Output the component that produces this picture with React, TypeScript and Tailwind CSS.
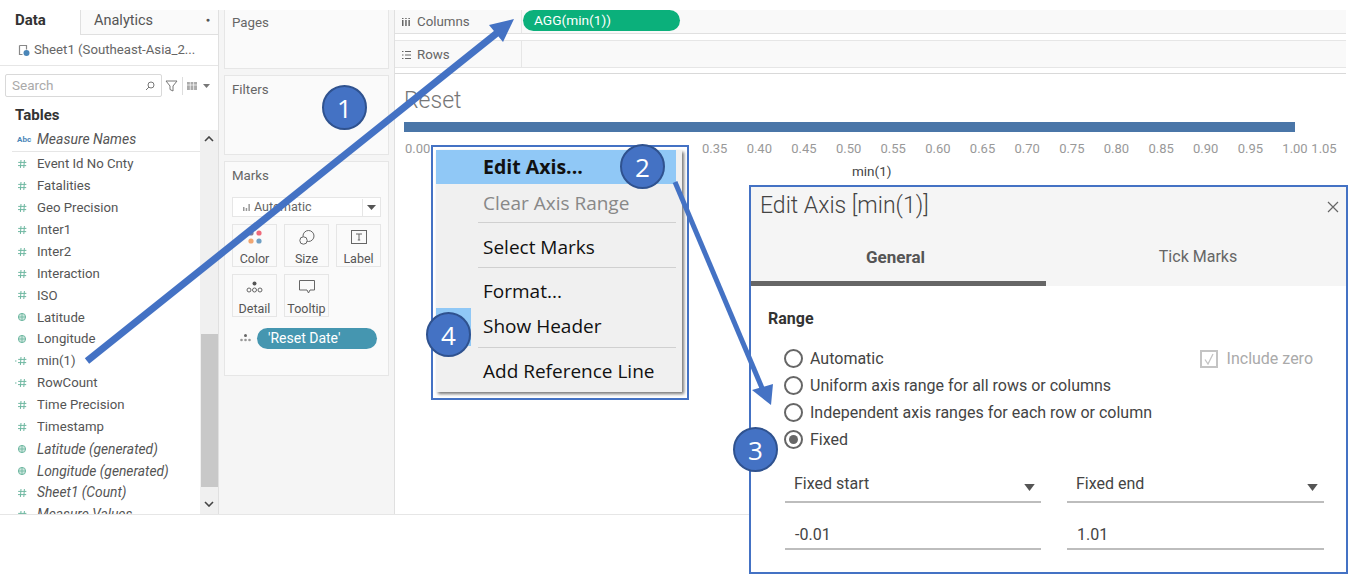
import React from "react";

const teal = "#6fb8a2";
const Hash = ({ calc }: { calc?: boolean }) => (
  <svg width="14" height="10" viewBox="0 0 14 10" className="shrink-0">
    {calc && <path d="M0 5h1.5" stroke={teal} strokeWidth="1.2" />}
    <path d="M6 1 5.400 9M9.400 1 8.800 9M3.200 3.400h8.200M3 6.600h8.200" stroke={teal} strokeWidth="1" fill="none" />
  </svg>
);
const Globe = () => (
  <svg width="14" height="10" viewBox="0 0 14 10" className="shrink-0">
    <circle cx="7" cy="5" r="3.600" stroke={teal} strokeWidth="1" fill="#cfe8df" />
    <path d="M3.400 5h7.200M7 1.400v7.200" stroke={teal} strokeWidth="0.9" />
  </svg>
);

type F = { n: string; k: "h" | "g" | "c"; i?: boolean };
const fields: F[] = [
  { n: "Event Id No Cnty", k: "h" },
  { n: "Fatalities", k: "h" },
  { n: "Geo Precision", k: "h" },
  { n: "Inter1", k: "h" },
  { n: "Inter2", k: "h" },
  { n: "Interaction", k: "h" },
  { n: "ISO", k: "h" },
  { n: "Latitude", k: "g" },
  { n: "Longitude", k: "g" },
  { n: "min(1)", k: "c" },
  { n: "RowCount", k: "c" },
  { n: "Time Precision", k: "h" },
  { n: "Timestamp", k: "h" },
  { n: "Latitude (generated)", k: "g", i: true },
  { n: "Longitude (generated)", k: "g", i: true },
  { n: "Sheet1 (Count)", k: "h", i: true },
  { n: "Measure Values", k: "h", i: true },
];

const ticks = ["0.35", "0.40", "0.45", "0.50", "0.55", "0.60", "0.65", "0.70", "0.75", "0.80", "0.85", "0.90", "0.95"];

const MarkBtn = ({ label, children }: { label: string; children: React.ReactNode }) => (
  <div className="w-[45px] h-[43px] border border-[#e6e6e6] bg-[#fafafa] flex flex-col items-center pt-[3px]">
    <div className="h-[21px] flex items-center justify-center">{children}</div>
    <div className="text-[12.500px] leading-[15px] text-[#555] mt-[4px]">{label}</div>
  </div>
);

const Circle = ({ n, cls }: { n: string; cls: string }) => (
  <div
    className={
      "absolute w-[45px] h-[45px] rounded-full bg-[#4472c4] border-2 border-[#2f528f] flex items-center justify-center text-white text-[26px] leading-none font-['Open_Sans',sans-serif] " +
      cls
    }
  >
    {n}
  </div>
);

const Radio = ({ label, on }: { label: string; on?: boolean }) => (
  <div className="h-[27px] flex items-center">
    <div className="w-[19px] h-[19px] rounded-full border-2 border-[#666] bg-white flex items-center justify-center">
      {on && <div className="w-[9px] h-[9px] rounded-full bg-[#666]" />}
    </div>
    <span className="ml-[7px] text-[16px] text-[#444]">{label}</span>
  </div>
);

const Menu = ({ t, cls = "text-[#111]", h }: { t: string; cls?: string; h: string }) => (
  <div className={"pl-[47px] flex items-center text-[19px] whitespace-nowrap " + cls + " " + h}>{t}</div>
);
const Sep = () => <div className="ml-[42px] mr-[6px] h-px bg-[#d0d0d0]" />;

const Select = ({ t }: { t: string }) => (
  <div className="h-[35px] border-b-2 border-[#bdbdbd] flex items-start justify-between pt-[4px] pl-[9px] pr-[6px] text-[16px] text-[#444]">
    <span>{t}</span>
    <svg width="11" height="7" viewBox="0 0 12 8" className="mt-[12px]"><path d="M0 0h12L6 8z" fill="#555" /></svg>
  </div>
);
const Input = ({ t }: { t: string }) => (
  <div className="h-[38px] mt-[9px] border-b-2 border-[#bdbdbd] pt-[11px] pl-[10px] text-[16px] leading-[24px] text-[#444]">{t}</div>
);

export default function App() {
  return (
    <div className="relative w-[1357px] h-[585px] overflow-hidden bg-white font-['Roboto',sans-serif] text-[#555]">
      <div className="h-[10px]" />
      <div className="flex h-[505px] w-[1346px] border-b border-[#e6e6e6]">
        {/* Data pane */}
        <div className="w-[219px] shrink-0 flex flex-col border-r border-[#e0e0e0] overflow-hidden">
          <div className="flex h-[25px] shrink-0">
            <div className="w-[80px] pl-[15px] text-[15px] font-bold text-[#333] leading-[20px]">Data</div>
            <div className="flex-1 border-l border-b border-[#e0e0e0] bg-[#fafafa] pl-[13px] pr-[8px] flex justify-between text-[14.500px] leading-[22px] text-[#555]">
              Analytics
              <span className="text-[7px] leading-[20px]">●</span>
            </div>
          </div>
          <div className="h-[31px] shrink-0 border-b border-[#e6e6e6] flex items-center pl-[17px] text-[13.200px] text-[#666] whitespace-nowrap">
            <svg width="14" height="14" viewBox="0 0 14 14" className="mr-[3px]">
              <path d="M2.500 2.500h7v4M2.500 2.500v9h3" fill="none" stroke="#888" strokeWidth="1.2" />
              <circle cx="9.500" cy="10" r="3" fill="#4a86b8" />
            </svg>
            Sheet1 (Southeast-Asia_2...
          </div>
          <div className="h-[40px] shrink-0 flex items-center pl-[5px] pb-[1px]">
            <div className="w-[157px] h-[23px] border border-[#d9d9d9] rounded-[2px] flex items-center justify-between px-[6px] text-[13.500px] text-[#aaa]">
              Search
              <svg width="10" height="10" viewBox="0 0 10 10"><circle cx="6" cy="4" r="3" fill="none" stroke="#777" /><path d="M4 6 1 9" stroke="#777" /></svg>
            </div>
            <svg width="13" height="12" viewBox="0 0 13 12" className="ml-[3px]"><path d="M1 1h11L8 6v5L5 9.500V6z" fill="none" stroke="#777" /></svg>
            <div className="w-px h-[18px] bg-[#ddd] ml-[4px]" />
            <svg width="10" height="8" viewBox="0 0 10 8" className="ml-[4px]"><path d="M0 0h10v8H0z" fill="#aaa" /><path d="M3.300 0v8M6.600 0v8M0 3h10" stroke="#fff" strokeWidth="0.7" /></svg>
            <svg width="7" height="4" viewBox="0 0 7 4" className="ml-[6px]"><path d="M0 0h7L3.500 4z" fill="#777" /></svg>
          </div>
          <div className="h-[24px] shrink-0 pl-[15px] text-[15px] font-bold text-[#333] leading-[18px]">Tables</div>
          <div className="flex flex-1 min-h-0">
            <div className="flex-1 min-w-0 overflow-hidden">
              <div className="h-[22px] ml-[12px] border-b border-[#e6e6e6] flex items-center pb-[2px] text-[14px]">
                <span className="w-[25px] text-[8px] font-bold text-[#4a86b8] pl-[5px]">Abc</span>
                <span className="italic text-[#555] whitespace-nowrap">Measure Names</span>
              </div>
              <div className="pt-[1px]">
                {fields.map((f) => (
                  <div key={f.n} className="h-[21.930px] flex items-center pl-[15px] whitespace-nowrap">
                    <span className="w-[22px]">{f.k === "g" ? <Globe /> : <Hash calc={f.k === "c"} />}</span>
                    <span className={f.i ? "italic text-[13.800px] text-[#555]" : "text-[13.200px] text-[#555]"}>{f.n}</span>
                  </div>
                ))}
              </div>
            </div>
            <div className="w-[18px] shrink-0 bg-[#f0f0f0] flex flex-col items-center">
              <svg width="10" height="6" viewBox="0 0 10 6" className="mt-[6px]"><path d="M1 5l4-4 4 4" fill="none" stroke="#444" strokeWidth="1.6" /></svg>
              <div className="w-[17px] h-[153px] bg-[#c8c8c8] mt-[192px]" />
              <svg width="10" height="6" viewBox="0 0 10 6" className="mt-[14px]"><path d="M1 1l4 4 4-4" fill="none" stroke="#444" strokeWidth="1.6" /></svg>
            </div>
          </div>
        </div>

        {/* Shelves column */}
        <div className="w-[176px] shrink-0 bg-[#f5f5f5] border-r border-[#e0e0e0] px-[5px] flex flex-col gap-[6px]">
          <div className="h-[59px] bg-[#fafafa] border border-[#e6e6e6] border-t-0 pl-[7px] pt-[3px] text-[13.300px] text-[#666]">Pages</div>
          <div className="h-[80px] bg-[#fafafa] border border-[#e6e6e6] pl-[7px] pt-[4px] text-[13.300px] text-[#666]">Filters</div>
          <div className="h-[215px] bg-[#fafafa] border border-[#e6e6e6] px-[7px] pt-[4px] text-[13.300px] text-[#666]">
            Marks
            <div className="mt-[11px] h-[20px] border border-[#e6e6e6] bg-white flex items-center text-[12.500px] pl-[10px] pt-[1px]">
              <svg width="7" height="7" viewBox="0 0 7 7" className="mr-[4px]"><path d="M0 3h1.500v4H0zM2.700 4h1.500v3H2.700zM5.400 0h1.500v7H5.400z" fill="#999" /></svg>
              Automatic
              <div className="ml-auto w-[18px] h-full border-l border-[#e6e6e6] flex items-center justify-center">
                <svg width="9" height="5" viewBox="0 0 9 5"><path d="M0 0h9L4.500 5z" fill="#555" /></svg>
              </div>
            </div>
            <div className="flex gap-[7px] mt-[7px]">
              <MarkBtn label="Color">
                <svg width="14" height="14" viewBox="0 0 14 14">
                  <circle cx="3" cy="3" r="2.600" fill="#7d7d9b" /><circle cx="11" cy="3" r="2.600" fill="#ef6a7b" />
                  <circle cx="3" cy="11" r="2.600" fill="#f0a672" /><circle cx="11" cy="11" r="2.600" fill="#6f9fc4" />
                </svg>
              </MarkBtn>
              <MarkBtn label="Size">
                <svg width="16" height="15" viewBox="0 0 16 15" fill="none" stroke="#666">
                  <circle cx="9.500" cy="6" r="5.500" fill="#fafafa" /><circle cx="4.500" cy="10.500" r="3.700" fill="#fafafa" />
                </svg>
              </MarkBtn>
              <MarkBtn label="Label">
                <svg width="16" height="14" viewBox="0 0 16 14" fill="none" stroke="#666">
                  <rect x="0.500" y="0.500" width="15" height="13" /><path d="M5 4h6M8 4v6M6.800 10h2.400" />
                </svg>
              </MarkBtn>
            </div>
            <div className="flex gap-[7px] mt-[7px]">
              <MarkBtn label="Detail">
                <svg width="17" height="12" viewBox="0 0 17 12" fill="none" stroke="#666">
                  <circle cx="8.500" cy="2.500" r="2" fill="#555" stroke="none" /><circle cx="3" cy="9" r="2" /><circle cx="8.500" cy="9" r="2" /><circle cx="14" cy="9" r="2" />
                </svg>
              </MarkBtn>
              <MarkBtn label="Tooltip">
                <svg width="16" height="14" viewBox="0 0 16 14" fill="none" stroke="#666"><path d="M.5.5h15v9.500H11l-1.500 3-1.500-3H.5z" /></svg>
              </MarkBtn>
            </div>
            <div className="flex items-center mt-[11px] pl-[8px]">
              <svg width="11" height="8" viewBox="0 0 11 8" fill="#999"><circle cx="5.500" cy="1.500" r="1.500" fill="#666" /><circle cx="1.500" cy="6" r="1.300" /><circle cx="5.500" cy="6" r="1.300" /><circle cx="9.500" cy="6" r="1.300" /></svg>
              <div className="ml-[6px] w-[120px] h-[21px] rounded-full bg-[#4596b0] text-white text-[14px] leading-[21px] pl-[11px]">'Reset Date'</div>
            </div>
          </div>
        </div>

        {/* View */}
        <div className="flex-1 min-w-0 flex flex-col">
          <div className="h-[24px] bg-[#f9f9f9] border-b border-[#e0e0e0] flex items-stretch">
            <div className="w-[127px] border-r border-[#e6e6e6] pl-[7px] flex items-center text-[13.300px] text-[#666]">
              <svg width="8" height="8" viewBox="0 0 8 8" className="mr-[7px]"><path d="M0 2h1.500v6H0zM3.200 2h1.500v6H3.200zM6.400 2h1.500v6H6.400zM0 0h1.500v1H0zM3.200 0h1.500v1H3.200zM6.400 0h1.500v1H6.400z" fill="#666" /></svg>
              Columns
            </div>
            <div className="ml-[1px] w-[157px] h-[21px] rounded-full bg-[#0bb07b] text-white text-[13.700px] leading-[21px] pl-[11px]">AGG(min(1))</div>
          </div>
          <div className="h-[6px]" />
          <div className="h-[28px] bg-[#f9f9f9] border-y border-[#e6e6e6] flex items-stretch">
            <div className="w-[127px] border-r border-[#e6e6e6] pl-[7px] pt-[2px] flex items-center text-[13.300px] text-[#666]">
              <svg width="9" height="8" viewBox="0 0 9 8" className="mr-[6px]"><path d="M0 .5h1.500M3 .5h6M0 4h1.500M3 4h6M0 7.500h1.500M3 7.500h6" stroke="#666" /></svg>
              Rows
            </div>
          </div>
          <div className="h-[6px] border-b border-[#d9d9d9]" />
          <div className="pl-[9px] pt-[13px]">
            <div className="text-[23px] leading-[28px] font-light text-[#777]">Reset</div>
            <div className="h-[10px] w-[891px] mt-[7px] bg-[#4a76a8]" />
            <div className="flex mt-[9px] text-[13px] leading-[16px] text-[#999] w-[945px] pl-[1px]">
              <span className="w-[297px]">0.00</span>
              {ticks.map((t) => (
                <span key={t} className="w-[44.650px] shrink-0">{t}</span>
              ))}
              <span className="w-[29px] shrink-0">1.00</span>
              <span>1.05</span>
            </div>
            <div className="text-[13.500px] leading-[16px] text-[#444] ml-[448px] mt-[6px]">min(1)</div>
          </div>
        </div>
      </div>

      {/* context menu annotation */}
      <div className="absolute left-[431px] top-[145px] w-[258px] h-[255px] border-2 border-[#4472c4] bg-white pl-[3px] pt-[3px] font-['Open_Sans',sans-serif]">
        <div className="w-[246px] h-[242px] bg-[#f0f0f0] shadow-[2px_2px_3px_#777] relative">
          <div className="absolute left-0 top-[158px] w-[35px] h-[38px] bg-[#90c8f6]" />
          <div className="relative">
            <div className="bg-[#90c8f6] w-[240px] h-[34px] pl-[47px] flex items-center text-[19.500px] font-bold text-[#111]">Edit Axis...</div>
            <Menu t="Clear Axis Range" cls="text-[#888]" h="h-[38px]" />
            <Sep />
            <Menu t="Select Marks" h="h-[44px] pt-[4px]" />
            <Sep />
            <Menu t="Format..." h="h-[46px]" />
            <Menu t="Show Header" h="h-[24px]" />
            <div className="h-[9px]" />
            <Sep />
            <Menu t="Add Reference Line" h="h-[42px] pt-[4px]" />
          </div>
        </div>
      </div>

      {/* Edit axis dialog annotation */}
      <div className="absolute left-[749px] top-[185px] w-[599px] h-[389px] border-2 border-[#4472c4] bg-white font-['Roboto',sans-serif]">
        <div className="h-[99px] bg-[#f5f5f5] relative">
          <div className="flex justify-between items-start pl-[9px] pr-[7px] pt-[3px]">
            <span className="text-[23px] leading-[32px] text-[#444] font-light">Edit Axis [min(1)]</span>
            <svg width="12" height="12" viewBox="0 0 12 12" className="mt-[11px]"><path d="M1 1l10 10M11 1 1 11" stroke="#666" strokeWidth="1.2" /></svg>
          </div>
          <div className="flex mt-[23px] text-[16px] leading-[24px]">
            <div className="w-[295px] pr-[6px] text-center font-bold text-[17px] text-[#555]">General</div>
            <div className="flex-1 pl-[4px] text-center text-[#666]">Tick Marks</div>
          </div>
          <div className="absolute left-0 bottom-0 w-[295px] h-[5px] bg-[#666]" />
        </div>
        <div className="px-[17px] pt-[23px]">
          <div className="text-[16px] leading-[20px] font-bold text-[#333]">Range</div>
          <div className="relative mt-[16px] pl-[16px]">
            <Radio label="Automatic" />
            <Radio label="Uniform axis range for all rows or columns" />
            <Radio label="Independent axis ranges for each row or column" />
            <Radio label="Fixed" on />
            <div className="absolute right-[16px] top-[2px] flex items-center text-[16px] text-[#aaa]">
              <div className="w-[18px] h-[18px] border-2 border-[#c4c4c4] flex items-center justify-center mr-[9px]">
                <svg width="12" height="12" viewBox="0 0 12 12"><path d="M2 6.500 5 11 10 1" fill="none" stroke="#c4c4c4" strokeWidth="1.3" /></svg>
              </div>
              Include zero
            </div>
          </div>
          <div className="flex gap-[26px] pl-[17px] pr-[5px] mt-[15px]">
            <div className="w-[257px]">
              <Select t="Fixed start" />
              <Input t="-0.01" />
            </div>
            <div className="w-[258px]">
              <Select t="Fixed end" />
              <Input t="1.01" />
            </div>
          </div>
        </div>
      </div>

      {/* callout arrows */}
      <svg className="absolute left-0 top-0 pointer-events-none" width="1357" height="585" viewBox="0 0 1357 585">
        <path d="M87 361 497 33" stroke="#4472c4" strokeWidth="7" fill="none" />
        <path d="M514 19 489 25 503 42z" fill="#4472c4" />
        <path d="M675 182 762 388" stroke="#4472c4" strokeWidth="5" fill="none" />
        <path d="M771 405 752 390 773 384z" fill="#4472c4" />
      </svg>
      <Circle n="1" cls="left-[322px] top-[85px]" />
      <Circle n="2" cls="left-[620px] top-[144px]" />
      <Circle n="3" cls="left-[733px] top-[427px]" />
      <Circle n="4" cls="left-[426px] top-[312px]" />
    </div>
  );
}
